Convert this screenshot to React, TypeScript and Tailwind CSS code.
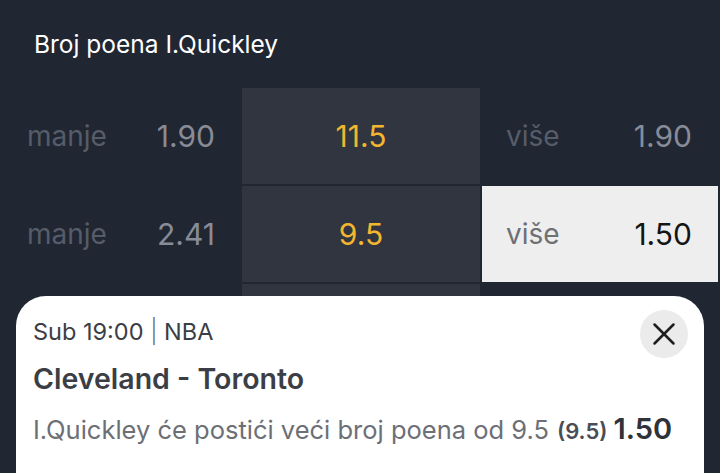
import { X } from "lucide-react";

type Row = { under: string; line: string; over: string; selected?: boolean };

const ROWS: Row[] = [
  { under: "1.90", line: "11.5", over: "1.90" },
  { under: "2.41", line: "9.5", over: "1.50", selected: true },
];

export default function App() {
  return (
    <div
      className="relative w-[720px] h-[473px] overflow-hidden bg-[#212633]"
      style={{ fontFamily: "Inter, 'Open Sans', sans-serif" }}
    >
      <header className="h-[88px] pl-[34px] pt-[28px] text-[24.5px] leading-[32px] text-white">
        Broj poena I.Quickley
      </header>

      {/* Tabela kvota */}
      <div className="flex flex-col gap-[2px] pr-[2px]">
        {ROWS.map((r) => (
          <div key={r.line} className="grid grid-cols-[240px_238px_236px] gap-[2px] h-[96px]">
            <div className="flex items-center justify-between pl-[27px] pr-[25px]">
              <span className="text-[28px] text-[#565c68]">manje</span>
              <span className="text-[30px] text-[#878c96]">{r.under}</span>
            </div>
            <div className="flex items-center justify-center bg-[#31353f]">
              <span className="text-[30px] text-[#f2b630]">{r.line}</span>
            </div>
            <div
              className={`flex items-center justify-between pl-[24px] pr-[26px] ${
                r.selected ? "bg-[#eeeeee]" : ""
              }`}
            >
              <span className={`text-[28px] ${r.selected ? "text-[#6e7074]" : "text-[#565c68]"}`}>
                više
              </span>
              <span className={`text-[30px] ${r.selected ? "text-[#151515]" : "text-[#878c96]"}`}>
                {r.over}
              </span>
            </div>
          </div>
        ))}
        {/* treći red, prekriven donjim panelom */}
        <div className="grid grid-cols-[240px_238px_236px] gap-[2px] h-[96px]">
          <div />
          <div className="bg-[#31353f]" />
          <div />
        </div>
      </div>

      {/* Bottom sheet sa izabranim tiketom */}
      <div className="absolute left-[16px] top-[296px] w-[688px] h-[200px] bg-white rounded-t-[30px] pl-[17px] pr-[16px] pt-[20px]">
        <div className="flex items-start justify-between">
          <div className="flex flex-col">
            <div className="text-[23.5px] leading-[32px] text-[#3b3e45]">
              Sub 19:00 <span className="text-[#6c6f76] font-light">|</span> NBA
            </div>
            <div className="mt-[14px] text-[28.5px] leading-[34px] font-semibold text-[#3b3e45]">
              Cleveland - Toronto
            </div>
          </div>
          <button className="w-[48px] h-[48px] rounded-full bg-[#ebebeb] flex items-center justify-center text-[#1e1e1e] -mt-[6px]">
            <X size={38} strokeWidth={1.6} />
          </button>
        </div>
        <div className="mt-[11px] flex items-baseline text-[#6c6f76] whitespace-nowrap">
          <span className="text-[25.5px]">I.Quickley će postići veći broj poena od 9.5</span>
          <span className="ml-[8px] text-[22px] font-semibold text-[#4a4d54]">(9.5)</span>
          <span className="ml-[6px] text-[29px] font-semibold text-[#2f3238]">1.50</span>
        </div>
      </div>
    </div>
  );
}
